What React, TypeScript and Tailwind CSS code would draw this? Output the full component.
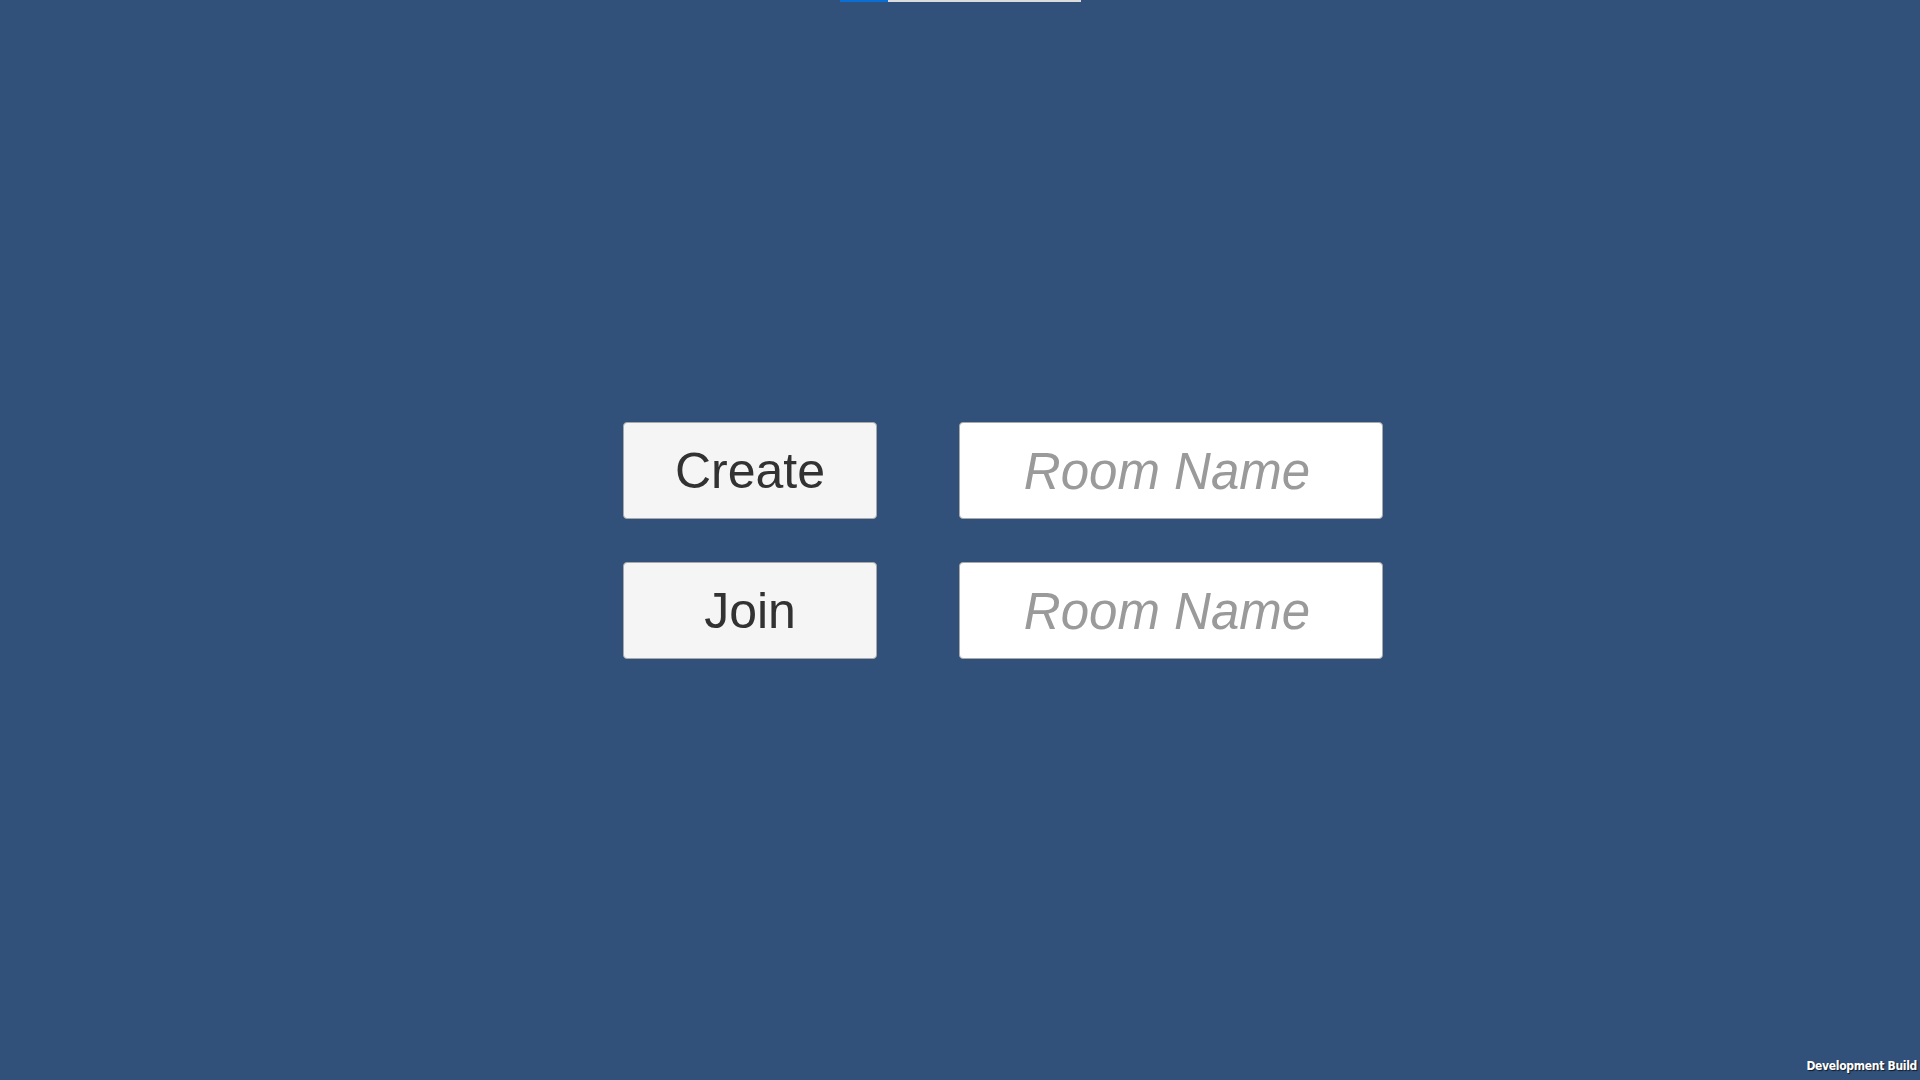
import React from 'react';

const rows = ['Create', 'Join'];

const App = () => {
  return (
    <div className="relative w-[1920px] h-[1080px] overflow-hidden bg-[#31507a] font-['Liberation_Sans',Arial,sans-serif]">
      {/* Progress line at top */}
      <div className="absolute top-0 left-[840px] flex h-[2px] w-[241px]">
        <div className="w-[48px] bg-[#0a6fd4]" />
        <div className="flex-1 bg-[#dcdcdc]" />
      </div>

      <div className="flex h-full flex-col justify-center pl-[623px]">
        <div className="flex flex-col gap-[43px]">
          {rows.map((label) => (
            <div key={label} className="flex items-center gap-[82px]">
              <button className="flex h-[97px] w-[254px] items-center justify-center rounded-[4px] border border-[#a8a8a8] bg-[#f5f5f5] pt-[2px] text-[50px] leading-none text-[#323232]">
                {label}
              </button>
              <div className="flex h-[97px] w-[424px] items-center justify-center rounded-[4px] border border-[#a8a8a8] bg-white pt-[2px]">
                <span className="pr-[8px] text-[51px] italic leading-none text-[#9a9a9a]">Room Name</span>
              </div>
            </div>
          ))}
        </div>
      </div>

      {/* Development build label */}
      <div className="absolute bottom-[8px] right-[3px] text-[12px] font-bold leading-none tracking-[-0.3px] text-white [text-shadow:1px_1px_1px_rgba(0,0,0,0.7)] font-['DejaVu_Sans_Condensed','DejaVu_Sans',sans-serif]">
        Development Build
      </div>
    </div>
  );
};

export default App;
